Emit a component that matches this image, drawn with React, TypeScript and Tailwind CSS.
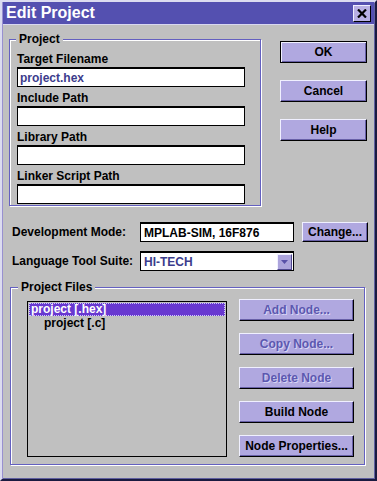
const font = "font-['Liberation_Sans',Arial,sans-serif]"

function Btn({ label, w, h = 22, disabled = false, def = false }: { label: string; w: number; h?: number; disabled?: boolean; def?: boolean }) {
  return (
    <div
      style={{ width: w, height: h }}
      className={
        "flex items-center justify-center bg-[#b0a8e0] border text-[12px] font-bold leading-none " +
        (def
          ? "border-black shadow-[inset_1px_1px_0_#f0f0ff,inset_-1px_-1px_0_#6860a8] "
          : "border-t-[#f0f0ff] border-l-[#f0f0ff] border-r-black border-b-black shadow-[inset_-1px_-1px_0_#6860a8] ") +
        (disabled ? "text-[#5c58b0] [text-shadow:1px_1px_0_#d8d4f4]" : "text-black")
      }
    >
      {label}
    </div>
  )
}

function Field({ label, value }: { label: string; value?: string }) {
  return (
    <div>
      <div className="h-[19px] flex items-end pb-[2px] text-[12px] font-bold leading-none text-black">{label}</div>
      <div className="w-[228px] h-[20px] bg-white border border-black border-t-2 flex items-center px-[2px] text-[12px] font-bold text-[#3c3c8c]">
        {value}
      </div>
    </div>
  )
}

export default function App() {
  return (
    <div className={font + " w-[377px] h-[481px] bg-[#c0c0c0] border-2 border-t-[#dcdcf0] border-l-[#dcdcf0] border-r-[#1a1a40] border-b-[#1a1a40] shadow-[inset_1px_1px_0_#9890d0,inset_-1px_-1px_0_#6060a0] overflow-hidden"}>
      {/* title bar */}
      <div className="mx-[1px] h-[23px] bg-[#5450b0] flex items-center justify-between pl-[3px] pr-[3px] border-b border-[#d8d8f0]">
        <span className="text-white text-[16px] font-bold leading-none">Edit Project</span>
        <div className="w-[18px] h-[17px] bg-[#b8b0e4] border border-t-[#f0f0ff] border-l-[#f0f0ff] border-r-black border-b-black flex items-center justify-center">
          <svg width="10" height="9" viewBox="0 0 10 9">
            <path d="M1 0.5 L9 8.5 M9 0.5 L1 8.5" stroke="#000" strokeWidth="2.2" />
          </svg>
        </div>
      </div>

      {/* top section */}
      <div className="flex pl-[7px] mt-[14px]">
        <div className="relative w-[252px] h-[167px] border border-[#6460c0] shadow-[inset_1px_1px_0_#fff,1px_1px_0_#fff] pl-[7px] pt-[8px]">
          <span className="absolute -top-[8px] left-[6px] bg-[#c0c0c0] px-[3px] text-[12px] font-bold leading-[14px]">Project</span>
          <div className="flex flex-col gap-[0px]">
            <Field label="Target Filename" value="project.hex" />
            <Field label="Include Path" />
            <Field label="Library Path" />
            <Field label="Linker Script Path" />
          </div>
        </div>
        <div className="ml-[19px] pt-[2px] flex flex-col gap-[17px]">
          <Btn label="OK" w={87} def />
          <Btn label="Cancel" w={87} />
          <Btn label="Help" w={87} />
        </div>
      </div>

      {/* development mode */}
      <div className="flex items-center pl-[10px] mt-[16px]">
        <span className="w-[128px] text-[12px] font-bold">Development Mode:</span>
        <div className="w-[154px] h-[20px] bg-white border border-black border-t-2 flex items-center px-[3px] text-[12px] font-bold text-black">
          MPLAB-SIM, 16F876
        </div>
        <div className="ml-[8px]">
          <Btn label="Change..." w={66} h={20} />
        </div>
      </div>

      {/* language tool suite */}
      <div className="flex items-center pl-[10px] mt-[9px]">
        <span className="w-[128px] text-[12px] font-bold">Language Tool Suite:</span>
        <div className="w-[154px] h-[20px] bg-white border border-black border-t-2 flex items-center justify-between pl-[3px] pr-[1px] text-[12px] font-bold text-[#3c3c8c]">
          <span>HI-TECH</span>
          <div className="w-[15px] h-[16px] bg-[#aca4dc] border border-t-[#f0f0ff] border-l-[#f0f0ff] border-r-[#504890] border-b-[#504890] flex items-center justify-center">
            <svg width="7" height="4" viewBox="0 0 7 4">
              <path d="M0 0 H7 L3.5 4 Z" fill="#5850a8" />
            </svg>
          </div>
        </div>
      </div>

      {/* project files */}
      <div className="relative ml-[8px] mt-[16px] w-[355px] h-[178px] border border-[#6460c0] shadow-[inset_1px_1px_0_#fff,1px_1px_0_#fff] flex items-start pl-[16px] pt-[11px]">
        <span className="absolute -top-[8px] left-[7px] bg-[#c0c0c0] px-[3px] text-[12px] font-bold leading-[14px]">Project Files</span>
        <div className="mt-[2px] w-[200px] h-[156px] border border-black bg-[#c0c0c0] pt-[1px] px-[1px] text-[12px] font-bold leading-[13px]">
          <div className="h-[13px] bg-[#6838d0] text-white pl-[2px] outline-1 outline-dotted outline-[#d0c8ff] -outline-offset-1">project [.hex]</div>
          <div className="h-[13px] pl-[15px] mt-[1px] text-black">project [.c]</div>
        </div>
        <div className="ml-[12px] flex flex-col gap-[12px]">
          <Btn label="Add Node..." w={115} disabled />
          <Btn label="Copy Node..." w={115} disabled />
          <Btn label="Delete Node" w={115} disabled />
          <Btn label="Build Node" w={115} />
          <Btn label="Node Properties..." w={115} />
        </div>
      </div>
    </div>
  )
}
